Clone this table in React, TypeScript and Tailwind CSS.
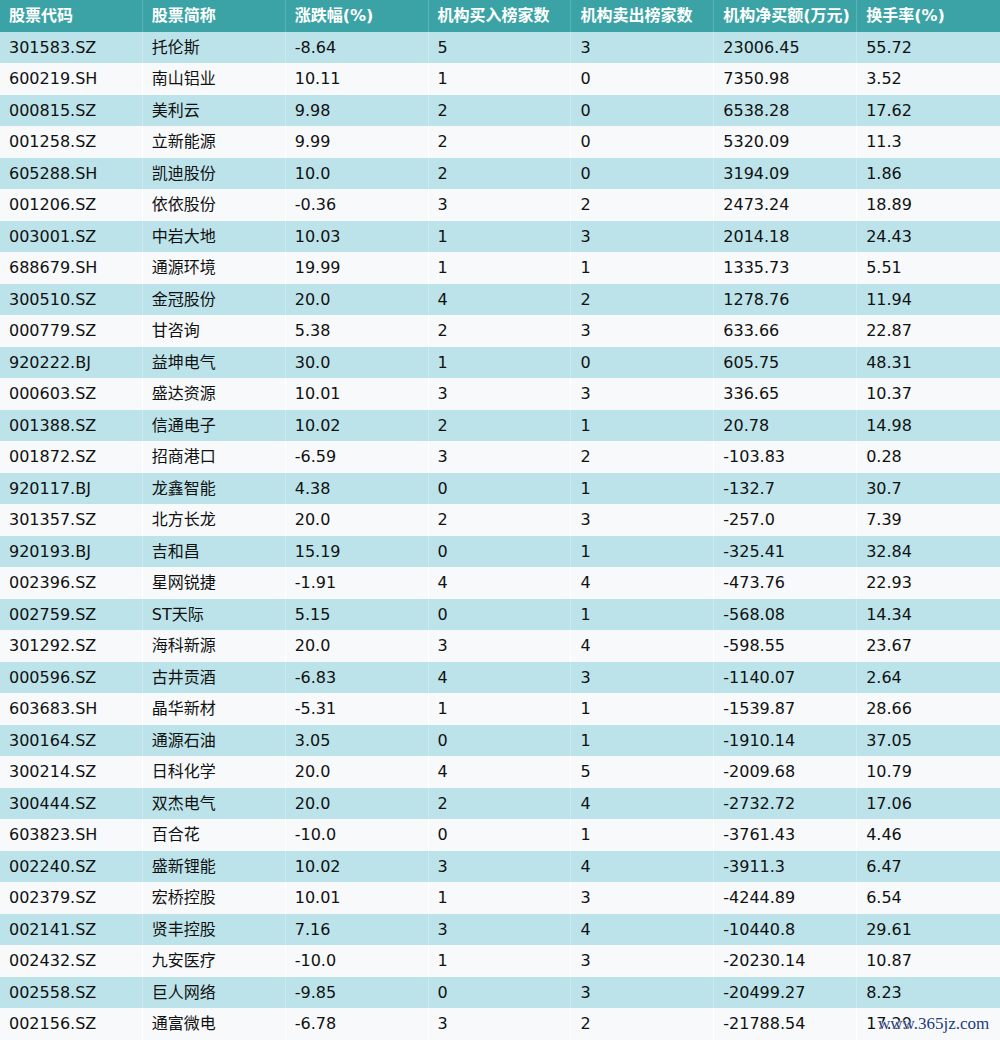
import React from "react";

const headers = ["股票代码", "股票简称", "涨跌幅(%)", "机构买入榜家数", "机构卖出榜家数", "机构净买额(万元)", "换手率(%)"];

const rows: string[][] = [
  ["301583.SZ", "托伦斯", "-8.64", "5", "3", "23006.45", "55.72"],
  ["600219.SH", "南山铝业", "10.11", "1", "0", "7350.98", "3.52"],
  ["000815.SZ", "美利云", "9.98", "2", "0", "6538.28", "17.62"],
  ["001258.SZ", "立新能源", "9.99", "2", "0", "5320.09", "11.3"],
  ["605288.SH", "凯迪股份", "10.0", "2", "0", "3194.09", "1.86"],
  ["001206.SZ", "依依股份", "-0.36", "3", "2", "2473.24", "18.89"],
  ["003001.SZ", "中岩大地", "10.03", "1", "3", "2014.18", "24.43"],
  ["688679.SH", "通源环境", "19.99", "1", "1", "1335.73", "5.51"],
  ["300510.SZ", "金冠股份", "20.0", "4", "2", "1278.76", "11.94"],
  ["000779.SZ", "甘咨询", "5.38", "2", "3", "633.66", "22.87"],
  ["920222.BJ", "益坤电气", "30.0", "1", "0", "605.75", "48.31"],
  ["000603.SZ", "盛达资源", "10.01", "3", "3", "336.65", "10.37"],
  ["001388.SZ", "信通电子", "10.02", "2", "1", "20.78", "14.98"],
  ["001872.SZ", "招商港口", "-6.59", "3", "2", "-103.83", "0.28"],
  ["920117.BJ", "龙鑫智能", "4.38", "0", "1", "-132.7", "30.7"],
  ["301357.SZ", "北方长龙", "20.0", "2", "3", "-257.0", "7.39"],
  ["920193.BJ", "吉和昌", "15.19", "0", "1", "-325.41", "32.84"],
  ["002396.SZ", "星网锐捷", "-1.91", "4", "4", "-473.76", "22.93"],
  ["002759.SZ", "ST天际", "5.15", "0", "1", "-568.08", "14.34"],
  ["301292.SZ", "海科新源", "20.0", "3", "4", "-598.55", "23.67"],
  ["000596.SZ", "古井贡酒", "-6.83", "4", "3", "-1140.07", "2.64"],
  ["603683.SH", "晶华新材", "-5.31", "1", "1", "-1539.87", "28.66"],
  ["300164.SZ", "通源石油", "3.05", "0", "1", "-1910.14", "37.05"],
  ["300214.SZ", "日科化学", "20.0", "4", "5", "-2009.68", "10.79"],
  ["300444.SZ", "双杰电气", "20.0", "2", "4", "-2732.72", "17.06"],
  ["603823.SH", "百合花", "-10.0", "0", "1", "-3761.43", "4.46"],
  ["002240.SZ", "盛新锂能", "10.02", "3", "4", "-3911.3", "6.47"],
  ["002379.SZ", "宏桥控股", "10.01", "1", "3", "-4244.89", "6.54"],
  ["002141.SZ", "贤丰控股", "7.16", "3", "4", "-10440.8", "29.61"],
  ["002432.SZ", "九安医疗", "-10.0", "1", "3", "-20230.14", "10.87"],
  ["002558.SZ", "巨人网络", "-9.85", "0", "3", "-20499.27", "8.23"],
  ["002156.SZ", "通富微电", "-6.78", "3", "2", "-21788.54", "17.29"],
];

export default function App() {
  return (
    <div
      className="relative w-[1000px] h-[1040px] overflow-hidden bg-[#f8f9fb]"
      style={{ fontFamily: '"DejaVu Sans", "Noto Sans CJK SC", sans-serif' }}
    >
      <div className="grid grid-cols-7 h-[31.5px] bg-[#3ba3a6] text-white font-bold text-[16px]">
        {headers.map((h, i) => (
          <div
            key={i}
            className={`flex items-center pl-[9px] whitespace-nowrap overflow-hidden ${i < 6 ? "border-r border-[#5cb3b6]" : ""}`}
          >
            {h}
          </div>
        ))}
      </div>
      {rows.map((r, ri) => (
        <div
          key={ri}
          className={`grid grid-cols-7 h-[31.5px] text-[16px] text-[#111111] ${ri % 2 === 0 ? "bg-[#bce3e9]" : "bg-[#f8f9fb]"}`}
        >
          {r.map((c, ci) => (
            <div
              key={ci}
              className={`flex items-center pl-[9px] pt-[1px] whitespace-nowrap ${ci < 6 ? (ri % 2 === 0 ? "border-r border-[#cdeaee]" : "border-r border-[#ffffff]") : ""}`}
            >
              {c}
            </div>
          ))}
        </div>
      ))}
      <div
        className="absolute left-[878px] top-[1015px] text-[17px] leading-none text-[#1a3a80]"
        style={{ fontFamily: '"Liberation Serif", serif', textShadow: "0 0 2px #ffffff, 0 0 2px #ffffff, 0 0 1px #ffffff" }}
      >
        www.365jz.com
      </div>
    </div>
  );
}
